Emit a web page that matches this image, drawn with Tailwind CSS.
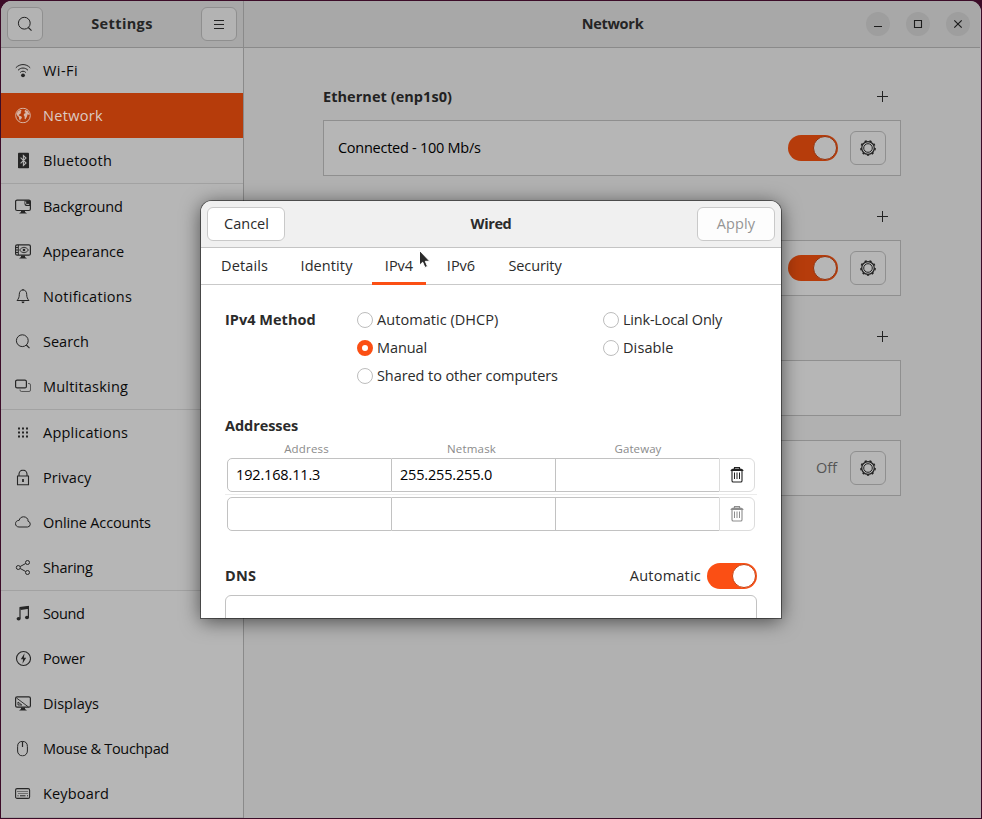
<!DOCTYPE html>
<html lang="en">
<head>
<meta charset="utf-8">
<title>Settings</title>
<script src="https://cdn.jsdelivr.net/npm/@tailwindcss/browser@4"></script>
</head>
<body class="h-[819px] w-[982px] overflow-hidden bg-[#3c0c28] pt-px pl-px font-['Open_Sans','Noto_Sans',sans-serif] text-[14.5px] leading-5">

<svg class="hidden">
  <symbol id="gear" viewBox="0 0 18 18">
    <circle cx="9" cy="9" r="6.3" fill="none" stroke="currentColor" stroke-width="1.2"/>
    <circle cx="9" cy="9" r="7.1" fill="none" stroke="currentColor" stroke-width="1.5" stroke-dasharray="2.2 2.76"/>
    <circle cx="9" cy="9" r="4.3" fill="none" stroke="currentColor" stroke-width="1"/>
  </symbol>
  <symbol id="plus" viewBox="0 0 11 11"><path d="M5.5 0v11M0 5.5h11" stroke="currentColor" stroke-width="1"/></symbol>
  <symbol id="find" viewBox="0 0 16 16"><circle cx="7.3" cy="7.2" r="5.9" fill="none" stroke="currentColor"/><path d="M11.3 11.5l3.2 3.1" stroke="currentColor" stroke-width="1.1"/></symbol>
  <symbol id="trash" viewBox="0 0 14 17">
    <path d="M4.500 3V1.500h5V3" fill="none" stroke="currentColor" stroke-width="1.100"/>
    <path d="M.5 5C.5 3.500 2 2.500 4 2.500h6c2 0 3.500 1 3.500 2.500z" fill="currentColor"/>
    <path d="M2 4.500v10.200q0 1.300 1.300 1.300h7.400q1.300 0 1.300-1.300V4.500" fill="none" stroke="currentColor" stroke-width="1.100"/>
    <path d="M4.500 6.500v6.500M7 6.500v6.500M9.500 6.500v6.500" stroke="currentColor" stroke-width="1"/>
  </symbol>
</svg>

<div class="relative flex h-[817px] w-[980px] overflow-hidden rounded-t-[11px] bg-[#b1b1b1] text-black">

  <!-- Sidebar -->
  <aside class="flex w-[243px] flex-none flex-col border-r border-[#8a8a8a] bg-[#b6b6b6]">
    <header class="flex h-[47px] flex-none items-center justify-between border-b border-[#8a8a8a] bg-[#a8a8a8] px-[6px]">
      <button class="grid h-[34px] w-9 place-items-center rounded-md border border-[#8f8f8f] bg-[#b3b3b3] text-[#222]"><svg class="size-4"><use href="#find"/></svg></button>
      <h1 class="font-bold tracking-[0.39px] text-[#252525]">Settings</h1>
      <button class="grid h-[34px] w-9 place-items-center rounded-md border border-[#8f8f8f] bg-[#b3b3b3] text-[#222]"><svg class="h-[9px] w-[10px]" viewBox="0 0 10 9"><path d="M0 .5h10M0 4.500h10M0 8.500h10" stroke="currentColor"/></svg></button>
    </header>
    <nav class="flex flex-col text-[#0a0a0a] [&>a]:flex [&>a]:h-[45px] [&>a]:items-center [&>a]:gap-3 [&>a]:px-[14px] [&_svg]:size-4 [&_svg]:flex-none [&_svg]:-translate-y-[0.5px] [&_svg]:text-[#262626]">
      <a><svg viewBox="0 0 16 16" fill="none" stroke="currentColor"><path d="M.8 5.300C4.800 1 11.200 1 15.200 5.300M3 7.800c2.800-3 7.200-3 10 0M5.200 10c1.500-1.700 4.100-1.700 5.600 0"/><circle cx="8" cy="12.800" r="1.900" fill="currentColor" stroke="none"/></svg><span class="tracking-[0.45px]">Wi-Fi</span></a>
      <a class="bg-[#b63c0b] text-[#dccbc4]"><svg class="text-[#d8b5a6]!" viewBox="0 0 16 16"><circle cx="8" cy="8" r="7.300" fill="none" stroke="currentColor" stroke-width="1"/><path d="M1.500 6.200L3 3.800 5.500 2.200l1.200 1-1.200 1.300.8.900-1.800 1.300-.8 1.200 1.800.6 1.400 1-.2 1.300-1.200 1-.4 1.700-1-2.300-.2-1.700-1.600-1.200-.4-1.500zM10 2.200l2.800 1.500 1.700 3-.4.900-1.500-.9-.6 2.200-1.500 2.900-.8-.4-.1-2.400-1-1.400.8-1.700 1.600-.4-1.400-1z" fill="currentColor"/></svg><span class="tracking-[0.31px]">Network</span></a>
      <a><svg viewBox="0 0 16 16"><rect x="3" y="0" width="11" height="16" rx="1.200" fill="currentColor"/><path d="M5.600 5.200l5.400 5.300-2.600 2.500V3L11 5.500l-5.400 5.300" fill="none" stroke="#b6b6b6" stroke-width="1.100"/></svg><span class="tracking-[0.27px]">Bluetooth</span></a>
      <hr class="border-[#a2a2a2]">
      <a><svg viewBox="0 0 16 16"><rect x=".6" y="1.600" width="14.800" height="10.400" rx="1.500" fill="none" stroke="currentColor" stroke-width="1.200"/><path d="M9.500 2H15v5.500zM9.500 2v3.500q0 2 2 2H15z" fill="currentColor"/><path d="M10.700 3v2q0 .9.900.9h2.600" stroke="#b6b6b6" stroke-width="1" fill="none"/><path d="M6 12.300h4v1.200l2 1.500H4l2-1.500z" fill="currentColor"/></svg><span class="tracking-[-0.14px]">Background</span></a>
      <a><svg viewBox="0 0 16 16"><rect x=".6" y="1.300" width="14.800" height="10.400" rx="1.500" fill="none" stroke="currentColor" stroke-width="1.200"/><path d="M3.300 1.500v10M1 4h2M1 6.500h2M1 9h2" stroke="currentColor"/><path d="M4.500 6.500q4.500-5.500 9 0q-4.500 5.500-9 0z" fill="none" stroke="currentColor" stroke-width=".9"/><circle cx="9" cy="6.500" r="1.300" fill="currentColor"/><path d="M6 12h4v1.500l2 1.500H4l2-1.500z" fill="currentColor"/></svg><span class="tracking-[0.01px]">Appearance</span></a>
      <a><svg viewBox="0 0 16 16"><path d="M8 1.500c-2.600 0-3.700 2-3.700 4.300 0 3-.8 4.600-2.300 6.200h12c-1.500-1.600-2.300-3.200-2.300-6.200C11.700 3.500 10.600 1.500 8 1.500z" fill="none" stroke="currentColor" stroke-linejoin="round"/><path d="M6.500 13h3q0 1.800-1.500 1.800T6.500 13zM7.400.6h1.200v1H7.400z" fill="currentColor"/></svg><span class="tracking-[0.3px]">Notifications</span></a>
      <a><svg><use href="#find"/></svg><span>Search</span></a>
      <a><svg viewBox="0 0 16 16" fill="none" stroke="currentColor"><rect x=".6" y="1.600" width="10.800" height="7.800" rx="1.500" stroke-width="1.200"/><path d="M13 5h1q1.500 0 1.500 1.500v5q0 1.500-1.500 1.500H6.500Q5 13 5 11.500V11" stroke-opacity=".65"/></svg><span class="tracking-[0.21px]">Multitasking</span></a>
      <hr class="border-[#a2a2a2]">
      <a><svg viewBox="0 0 16 16"><path d="M3 3h2v2H3zM7 3h2v2H7zM11 3h2v2h-2zM3 7h2v2H3zM7 7h2v2H7zM11 7h2v2h-2zM3 11h2v2H3zM7 11h2v2H7zM11 11h2v2h-2z" fill="currentColor"/></svg><span class="tracking-[0.21px]">Applications</span></a>
      <a><svg viewBox="0 0 16 16"><path d="M2.500 6.500h11v8.900h-11zM4 6.500V4.600a4 4 0 0 1 8 0v1.900" fill="none" stroke="currentColor" stroke-width="1.100"/><path d="M7.100 9.500h1.800v3H7.100z" fill="currentColor"/></svg><span class="tracking-[0.07px]">Privacy</span></a>
      <a><svg viewBox="0 0 16 16"><path d="M4 12.500h8.500a2.900 2.900 0 0 0 .6-5.700C13.300 4 11 2.300 8.600 2.300 6.200 2.300 4.600 3.800 4.200 5.800 2 5.800.5 7.300.5 9.200c0 1.900 1.500 3.300 3.500 3.300z" fill="none" stroke="currentColor"/></svg><span class="tracking-[-0.14px]">Online Accounts</span></a>
      <a><svg viewBox="0 0 16 16" fill="none" stroke="currentColor"><circle cx="3.300" cy="8" r="2"/><circle cx="12.500" cy="3" r="2"/><circle cx="12.500" cy="13" r="2"/><path d="M5.200 7l5.500-3M5.200 9l5.500 3"/></svg><span class="tracking-[-0.23px]">Sharing</span></a>
      <hr class="border-[#a2a2a2]">
      <a><svg viewBox="0 0 16 16"><path d="M4.500 1.500L14 .3v3L5.700 4.400z" fill="currentColor"/><path d="M5 2v11M13.400 2v9.500" stroke="currentColor" stroke-width="1.200"/><ellipse cx="3.600" cy="13.300" rx="2" ry="1.700" fill="currentColor"/><ellipse cx="12" cy="12" rx="2" ry="1.700" fill="currentColor"/></svg><span class="tracking-[-0.36px]">Sound</span></a>
      <a><svg viewBox="0 0 16 16"><circle cx="8.500" cy="8" r="7" fill="none" stroke="currentColor" stroke-width="1.100"/><path d="M9.500 2.800L5.800 8.700h2.300l-.6 4.500 3.700-6H8.900z" fill="currentColor"/></svg><span class="tracking-[-0.21px]">Power</span></a>
      <a><svg viewBox="0 0 16 16"><rect x=".6" y="1.300" width="14.800" height="10.400" rx="1.500" fill="none" stroke="currentColor" stroke-width="1.200"/><path d="M1.500 2.500l12 9M3 6.500v3h3.800z" fill="none" stroke="currentColor" stroke-width=".9"/><path d="M6 12h4v1.500l2 1.500H4l2-1.500z" fill="currentColor"/></svg><span class="tracking-[0.01px]">Displays</span></a>
      <a><svg viewBox="0 0 16 16" fill="none" stroke="currentColor"><path d="M7.500.9C4.500.9 2.600 2.500 2.600 6v4.500a4.900 4.900 0 0 0 9.800 0V6C12.400 2.500 10.500.9 7.500.9z"/><path d="M7.500 1v5.500" stroke-width="1.200"/></svg><span class="tracking-[-0.32px]">Mouse &amp; Touchpad</span></a>
      <a><svg viewBox="0 0 16 16"><rect x=".6" y="3.100" width="14" height="9.800" rx="1.500" fill="none" stroke="currentColor" stroke-width="1.100"/><path d="M2.500 6h10.500M3.500 8h9" stroke="currentColor" stroke-width="1" stroke-dasharray="1 1"/><path d="M2.500 10.300h1M5 10.300h5.500M12 10.300h1" stroke="currentColor" stroke-width="1"/></svg><span class="tracking-[0.16px]">Keyboard</span></a>
    </nav>
    <div class="mt-auto h-px bg-[#a4a4a4]"></div>
  </aside>

  <!-- Network panel -->
  <main class="flex flex-1 flex-col border-r border-[#b7adb2]">
    <header class="grid h-[47px] flex-none grid-cols-[1fr_auto_1fr] items-center border-b border-[#8a8a8a] bg-[#a8a8a8]">
      <span></span>
      <h2 class="pl-px font-bold tracking-[-0.27px] text-[#252525]">Network</h2>
      <div class="flex justify-end gap-4 pr-[10px] text-[#1c1c1c] [&>button]:grid [&>button]:size-6 [&>button]:place-items-center [&>button]:rounded-full [&>button]:bg-[#9e9e9e] [&_svg]:size-2.5">
        <button><svg viewBox="0 0 10 10"><path d="M1 7.500h8" stroke="currentColor"/></svg></button>
        <button><svg viewBox="0 0 10 10"><path d="M1.500 1.500h7v7h-7z" fill="none" stroke="currentColor" stroke-width="1.100"/></svg></button>
        <button><svg viewBox="0 0 10 10"><path d="M1.300 1.300l7.400 7.400M8.700 1.300L1.300 8.700" stroke="currentColor" stroke-width="1.200"/></svg></button>
      </div>
    </header>
    <div class="flex w-[657px] flex-col pt-[26px] pl-[79px]">
      <div class="flex h-[46px] items-center justify-between pr-[13px] text-[#222]">
        <h3 class="font-bold tracking-[0.05px]">Ethernet (enp1s0)</h3>
        <svg class="mb-px size-[11px]"><use href="#plus"/></svg>
      </div>
      <div class="flex h-14 items-center gap-3 border border-[#8f8f8f] bg-[#b6b6b6] pr-[14px] pl-[14px]">
        <span class="flex-1 tracking-[-0.26px]">Connected - 100 Mb/s</span>
        <span class="flex h-[26px] w-[50px] items-center justify-end rounded-full bg-[#b63c0b] pr-px"><span class="size-6 rounded-full border border-[#963008] bg-[#b6b6b6]"></span></span>
        <button class="grid h-[34px] w-9 place-items-center rounded-md border border-[#8f8f8f] text-[#222]"><svg class="size-[18px]"><use href="#gear"/></svg></button>
      </div>
      <div class="mt-[18px] flex h-[46px] items-center justify-end pr-[13px] text-[#222]"><svg class="mb-px size-[11px]"><use href="#plus"/></svg></div>
      <div class="flex h-14 items-center justify-end gap-3 border border-[#8f8f8f] bg-[#b6b6b6] pr-[14px]">
        <span class="flex h-[26px] w-[50px] items-center justify-end rounded-full bg-[#b63c0b] pr-px"><span class="size-6 rounded-full border border-[#963008] bg-[#b6b6b6]"></span></span>
        <button class="grid h-[34px] w-9 place-items-center rounded-md border border-[#8f8f8f] text-[#222]"><svg class="size-[18px]"><use href="#gear"/></svg></button>
      </div>
      <div class="mt-[18px] flex h-[46px] items-center justify-end pr-[13px] text-[#222]"><svg class="mb-px size-[11px]"><use href="#plus"/></svg></div>
      <div class="h-14 border border-[#8f8f8f] bg-[#b6b6b6]"></div>
      <div class="mt-6 flex h-14 items-center justify-end gap-3 border border-[#8f8f8f] bg-[#b6b6b6] pr-[14px]">
        <span class="pr-px text-[#555]">Off</span>
        <button class="grid h-[34px] w-9 place-items-center rounded-md border border-[#8f8f8f] text-[#222]"><svg class="size-[18px]"><use href="#gear"/></svg></button>
      </div>
    </div>
  </main>
</div>

<!-- Connection editor dialog -->
<section class="absolute top-[201px] left-[201px] flex h-[417px] w-[580px] flex-col overflow-hidden rounded-t-[11px] bg-white text-[#2b2b2b] shadow-[0_0_0_1px_rgba(0,0,0,0.45),0_3px_20px_rgba(0,0,0,0.6)]">
  <header class="grid h-[47px] flex-none grid-cols-[1fr_auto_1fr] items-center border-b border-[#c4c4c4] bg-[#f0f0f0] px-[6px]">
    <button class="h-[34px] w-[78px] rounded-md border border-[#c9c9c9] bg-white pl-px">Cancel</button>
    <h2 class="font-bold tracking-[-0.4px]">Wired</h2>
    <button class="h-[34px] w-[78px] justify-self-end rounded-md border border-[#c9c9c9] bg-[#fdfdfd] tracking-[0.11px] text-[#959595]">Apply</button>
  </header>
  <div class="flex h-[37px] flex-none gap-[7px] border-b border-[#c9c9c9] pl-[7px] text-center leading-9">
    <span class="w-[72px] pl-px tracking-[0.13px]">Details</span>
    <span class="w-[78px] pl-px tracking-[0.1px]">Identity</span>
    <span class="h-[37px] w-[54px] border-b-3 border-[#fb4f14]">IPv4</span>
    <span class="w-[55px] pl-px">IPv6</span>
    <span class="w-[80px] tracking-[-0.1px]">Security</span>
  </div>
  <div class="flex flex-col px-6 pt-[21px]">
    <div class="grid grid-cols-[132px_246px_1fr] grid-rows-[28px_28px_28px] items-center [&_label]:flex [&_label]:items-center [&_label]:gap-1 [&_i]:size-4 [&_i]:rounded-full [&_i]:border [&_i]:border-[#bdbdbd] [&_i]:bg-white">
      <h3 class="font-bold tracking-[0.02px]">IPv4 Method</h3>
      <label><i></i><span class="tracking-[0.05px]">Automatic (DHCP)</span></label>
      <label><i></i><span class="tracking-[-0.21px]">Link-Local Only</span></label>
      <label class="col-start-2"><i class="border-[5.500px]! border-[#fb4f14]!"></i><span class="tracking-[-0.1px]">Manual</span></label>
      <label><i></i><span class="tracking-[0.1px]">Disable</span></label>
      <label class="col-start-2 whitespace-nowrap"><i></i><span class="tracking-[-0.08px]">Shared to other computers</span></label>
    </div>
    <h3 class="mt-[26px] font-bold tracking-[-0.06px]">Addresses</h3>
    <div class="mt-1 grid h-[18px] grid-cols-[163px_167px_165px] text-center text-[11.5px] leading-[18px] text-[#8b8b8b]">
      <span class="tracking-[0.17px]">Address</span><span class="tracking-[0.21px]">Netmask</span><span class="pl-px tracking-[0.07px]">Gateway</span>
    </div>
    <div class="flex flex-col text-black">
      <div class="ml-[2px] grid h-[34px] w-[528px] grid-cols-[165px_164px_163px_36px] [&>*]:border-[#c2c2c2]">
        <span class="rounded-l-[5px] border pl-2 leading-8 tracking-[-0.15px]">192.168.11.3</span>
        <span class="border-y border-r pl-2 leading-8 tracking-[-0.17px]">255.255.255.0</span>
        <span class="border-y"></span>
        <button class="grid place-items-center rounded-r-[6px] border border-[#dcdcdc]! pr-px pb-px text-[#222]"><svg class="h-[17px] w-[14px]"><use href="#trash"/></svg></button>
      </div>
      <hr class="my-[2px] border-[#ececec]">
      <div class="ml-[2px] grid h-[34px] w-[528px] grid-cols-[165px_164px_163px_36px] [&>*]:border-[#c2c2c2]">
        <span class="rounded-l-[5px] border"></span>
        <span class="border-y border-r"></span>
        <span class="border-y"></span>
        <button class="grid place-items-center rounded-r-[6px] border border-[#dcdcdc]! pr-px pb-px text-[#8d8d8d]"><svg class="h-[17px] w-[14px]"><use href="#trash"/></svg></button>
      </div>
    </div>
    <div class="mt-8 flex h-[26px] items-center">
      <h3 class="flex-1 font-bold tracking-[0.2px]">DNS</h3>
      <span class="mr-[6px] tracking-[0.22px]">Automatic</span>
      <span class="flex h-[26px] w-[50px] items-center justify-end rounded-full bg-[#fb4f14] pr-px"><span class="size-6 rounded-full border border-[#c8400f] bg-white"></span></span>
    </div>
    <div class="mt-[6px] h-[34px] flex-none rounded-md border border-[#c2c2c2]"></div>
  </div>
</section>

<!-- Pointer -->
<svg class="absolute top-[249px] left-[418px] h-[20px] w-[13px]" viewBox="0 0 13 20"><path d="M1.500 1.500v14.700l3.200-3 2.200 5.300 2.600-1.100-2.200-5.100h4.500z" fill="#2b2b2b" stroke="#fff" stroke-width="1"/></svg>
</body>
</html>
